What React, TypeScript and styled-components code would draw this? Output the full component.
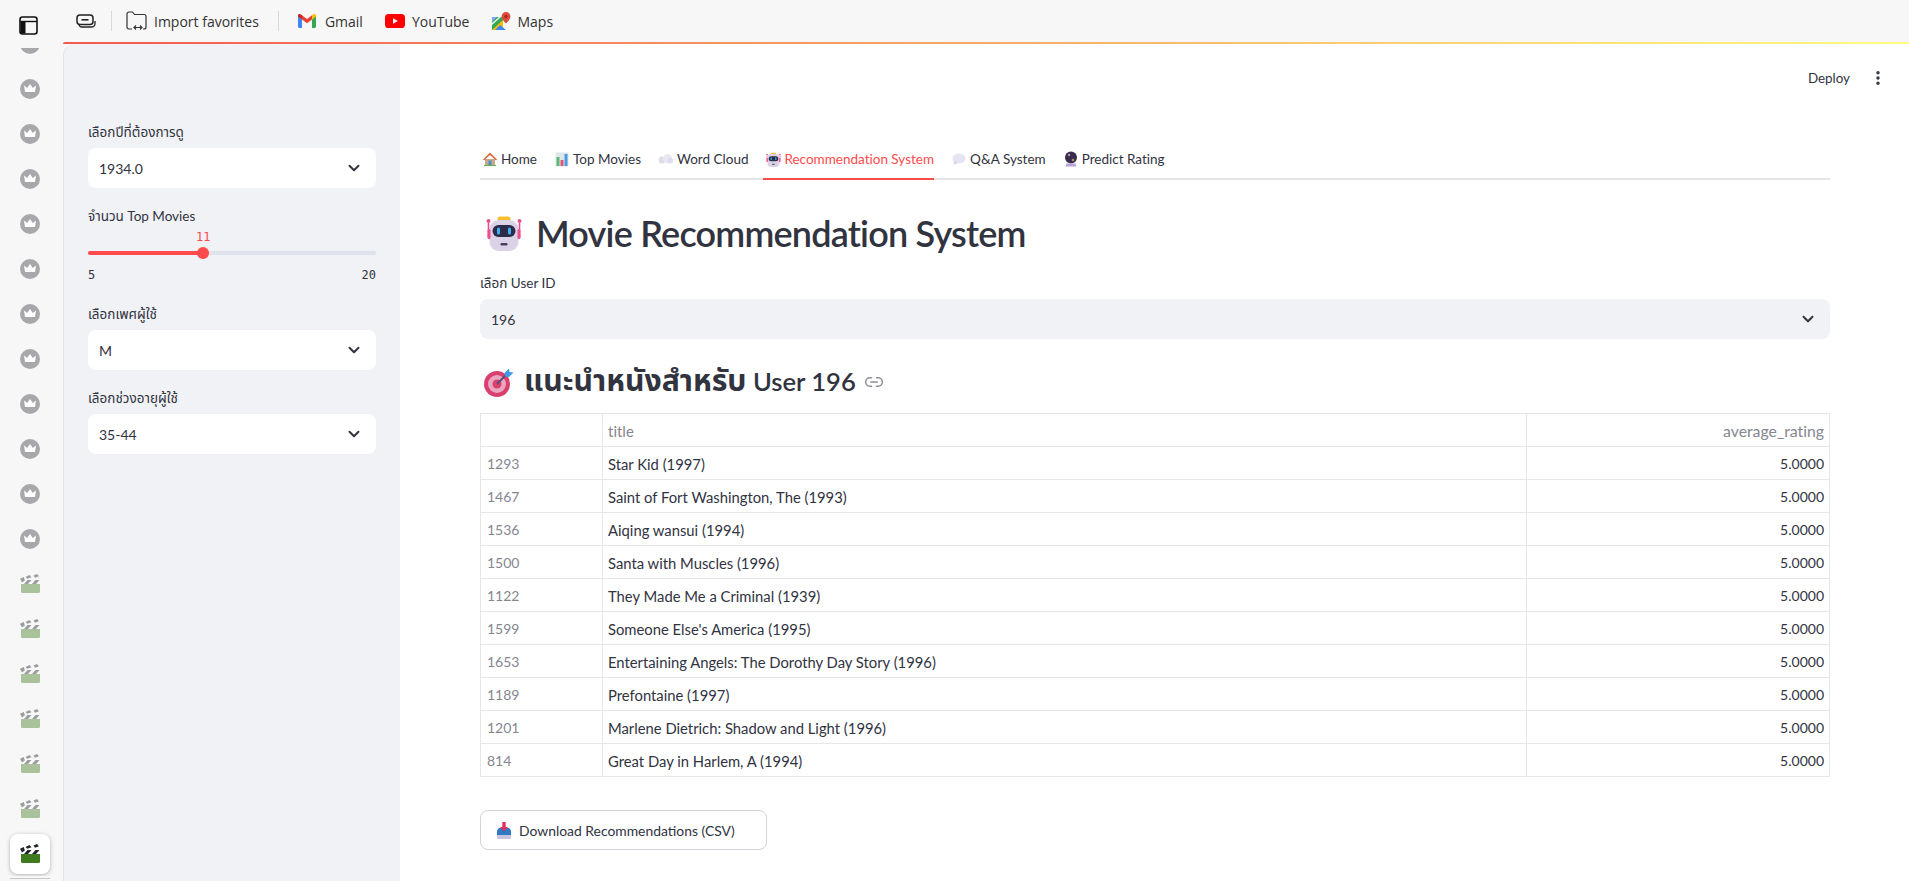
import React from "react";
import styled, { createGlobalStyle } from "styled-components";
import { ChevronDown, EllipsisVertical, Link2 } from "lucide-react";

const GlobalStyle = createGlobalStyle`
  html, body {
    margin: 0;
    padding: 0;
    height: 100%;
    overflow: hidden;
    background: #fff;
    font-family: "Lato", "Noto Sans", "Noto Sans Thai", "Liberation Sans", sans-serif;
    font-variant-ligatures: none;
    color: #31333f;
  }
  * { box-sizing: border-box; }
`;

const movies = [
  ["1293", "Star Kid (1997)"],
  ["1467", "Saint of Fort Washington, The (1993)"],
  ["1536", "Aiqing wansui (1994)"],
  ["1500", "Santa with Muscles (1996)"],
  ["1122", "They Made Me a Criminal (1939)"],
  ["1599", "Someone Else's America (1995)"],
  ["1653", "Entertaining Angels: The Dorothy Day Story (1996)"],
  ["1189", "Prefontaine (1997)"],
  ["1201", "Marlene Dietrich: Shadow and Light (1996)"],
  ["814", "Great Day in Harlem, A (1994)"],
];

const PanelIcon = () => (
  <svg width="19" height="19" viewBox="0 0 19 19" fill="none">
    <rect x="1" y="1" width="17" height="17" rx="2.5" stroke="#111" strokeWidth="1.6" />
    <path d="M1 5.5h17" stroke="#111" strokeWidth="1.4" />
    <path d="M1.5 5.5h5v12h-3a2 2 0 0 1-2-2z" fill="#111" />
  </svg>
);

const TabsIcon = () => (
  <svg width="20" height="14" viewBox="0 0 20 14" fill="none" stroke="#222">
    <path d="M3 10.5c.2 1.6 1.2 2.5 3 2.5h9c2.4 0 4-1.4 4-3.5V7" strokeWidth="1.3" />
    <rect x="1" y="1" width="16" height="9.5" rx="3" strokeWidth="1.5" />
    <path d="M5.5 5.8h7" strokeWidth="1.6" />
  </svg>
);

const ImportIcon = () => (
  <svg width="21" height="20" viewBox="0 0 21 20" fill="none" stroke="#333" strokeWidth="1.2">
    <path d="M6 18H3a2 2 0 0 1-2-2V3a2 2 0 0 1 2-2h3.5l2 2.5H18a2 2 0 0 1 2 2V16a2 2 0 0 1-2 2h-1" />
    <path d="M8 16.5h8M10 14.5l-2 2 2 2M14 14.5l2 2-2 2" />
  </svg>
);

const GmailIcon = () => (
  <svg width="18" height="14" viewBox="0 0 18 14">
    <path d="M0 2v10.8c0 .7.5 1.2 1.2 1.2H4V5.5z" fill="#4285f4" />
    <path d="M14 5.5V14h2.8c.7 0 1.2-.5 1.2-1.2V2z" fill="#34a853" />
    <path d="M4 5.5 9 9.2l5-3.7V1.2L9 5 4 1.2z" fill="#ea4335" />
    <path d="M14 1.2v4.3L18 2.4V1.6C18 .4 16.6-.4 15.6.3z" fill="#fbbc04" />
    <path d="M0 1.6v.8l4 3.1V1.2L2.4.3C1.4-.4 0 .4 0 1.6z" fill="#c5221f" />
  </svg>
);

const YouTubeIcon = () => (
  <svg width="20" height="14" viewBox="0 0 20 14">
    <rect width="20" height="14" rx="3.6" fill="#f00" />
    <path d="M8 4.2v5.6l4.8-2.8z" fill="#fff" />
  </svg>
);

const MapsIcon = () => (
  <svg width="20" height="19" viewBox="0 0 20 19">
    <path d="M1 5h11v13H1z" fill="#34a853" />
    <path d="M1 18 12 8v10z" fill="#fbbc04" />
    <path d="M4 18 9 13l6 5z" fill="#4285f4" />
    <path d="M1 5h5l-5 5z" fill="#7baaf7" />
    <path d="M1 11 8 5h2L1 13z" fill="#f1f3f4" />
    <path d="M15 0a4.4 4.4 0 0 0-4.4 4.4c0 3 4.4 7 4.4 7s4.400-4 4.400-7A4.400 4.400 0 0 0 15 0z" fill="#dd4b3e" />
    <circle cx="15" cy="4.400" r="1.600" fill="#a52714" />
  </svg>
);

const CrownBadge = () => (
  <svg width="20" height="20" viewBox="0 0 20 20">
    <circle cx="10" cy="10" r="10" fill="#a8a8ac" />
    <path d="M4 6.500 7.200 9 10 5l2.800 4L16 6.500l-1 6.500H5z" fill="#fff" />
  </svg>
);

const Clapper = () => (
  <svg width="20" height="19" viewBox="0 0 20 19">
    <path d="M1 10h19v7.500a1.500 1.500 0 0 1-1.500 1.500h-16A1.500 1.500 0 0 1 1 17.500z" fill="#3f7a1e" />
    <path d="M1.500 8.500h18V10h-18z" fill="#fff" />
    <path d="M4 10 7.500 6h4L8 10zM12 10l3.500-4h4L16 10z" fill="#20242b" />
    <path d="M0 4.800 3.800 3l1 3.500L2 8.500z" fill="#20242b" />
    <path d="M5.500 3 9.500 1l2 2.200-4.200 1.600zM13.500 1.500 17 0l2 2.200-4 1.600z" fill="#20242b" />
  </svg>
);

const HouseEmoji = () => (
  <svg width="14" height="14" viewBox="0 0 14 14">
    <path d="M2 7h10v6.500H2z" fill="#c7a98a" />
    <path d="M7 .5 0 7.500l1 1L7 3l6 5.500 1-1z" fill="#d9693c" />
    <path d="M5.500 8.500h3v5h-3z" fill="#4a90c2" />
    <path d="M1 13h12v1H1z" fill="#6cab5c" />
  </svg>
);

const ChartEmoji = () => (
  <svg width="14" height="15" viewBox="0 0 14 15">
    <rect x=".5" y=".5" width="13" height="14" rx="1" fill="#dfe6ea" />
    <path d="M1.500 5h3v9h-3z" fill="#5fb878" />
    <path d="M5.500 8h3v6h-3z" fill="#e2557a" />
    <path d="M9.500 2h3v12h-3z" fill="#4b9be0" />
  </svg>
);

const CloudEmoji = () => (
  <svg width="15" height="10" viewBox="0 0 15 10">
    <circle cx="4" cy="6" r="3.500" fill="#dcdcec" />
    <circle cx="9.500" cy="4.500" r="4.500" fill="#e9e9f4" />
    <circle cx="12" cy="6.500" r="3" fill="#dedeee" />
  </svg>
);

const RobotEmoji = ({ size }: { size: number }) => (
  <svg width={size} height={size} viewBox="0 0 36 36">
    <path d="M2.500 8v15M33.500 8v15" stroke="#ee4f8a" strokeWidth="1.600" />
    <circle cx="2.500" cy="6" r="2" fill="#ee4f8a" />
    <circle cx="33.500" cy="6" r="2" fill="#ee4f8a" />
    <rect x="11.500" y="1.500" width="13" height="5" rx="2.500" fill="#f3c12f" />
    <rect x="3.500" y="5" width="29" height="31" rx="9" fill="#dcd2e8" />
    <rect x="1.500" y="14" width="3" height="10" rx="1.500" fill="#ee4f8a" />
    <rect x="31.500" y="14" width="3" height="10" rx="1.500" fill="#ee4f8a" />
    <rect x="6.500" y="10" width="23" height="12" rx="6" fill="#2c2c48" />
    <rect x="11" y="12.500" width="3" height="7" rx="1.500" fill="#3fb0f2" />
    <rect x="22" y="12.500" width="3" height="7" rx="1.500" fill="#3fb0f2" />
    <rect x="14.500" y="28" width="7" height="2.500" rx="1.200" fill="#4a3f5c" />
  </svg>
);

const BubbleEmoji = () => (
  <svg width="14" height="13" viewBox="0 0 14 13">
    <ellipse cx="7" cy="5.500" rx="6.500" ry="5" fill="#e6e3f3" />
    <path d="M2.500 8 1.500 12 6 9.800z" fill="#d4d0e8" />
  </svg>
);

const BallEmoji = () => (
  <svg width="14" height="16" viewBox="0 0 14 16">
    <circle cx="7" cy="6.500" r="6" fill="#3a2c4c" />
    <circle cx="5" cy="4" r="1.200" fill="#a99bc0" />
    <path d="M9 7.500l.5 1 1 .5-1 .5-.5 1-.5-1-1-.5 1-.5z" fill="#f0d060" />
    <path d="M2.500 12.500h9l1 3h-11z" fill="#b9a4d6" />
  </svg>
);

const TargetEmoji = () => (
  <svg width="30" height="29" viewBox="0 0 30 29">
    <circle cx="13" cy="16" r="13" fill="#d9406e" />
    <circle cx="13" cy="16" r="9" fill="#eaa6c0" />
    <circle cx="13" cy="16" r="4.500" fill="#d9406e" />
    <path d="M13 16 24 5" stroke="#5a4a78" strokeWidth="1.800" />
    <path d="M20.500 5 25 .5l.5 3.500 4 .5L25 9l-4-.5z" fill="#3f9be8" />
  </svg>
);

const InboxEmoji = () => (
  <svg width="14" height="17" viewBox="0 0 14 17">
    <path d="M0 8.500 2 6h10l2 2.500V14H0z" fill="#2f78c4" />
    <path d="M0 13h14v3a1 1 0 0 1-1 1H1a1 1 0 0 1-1-1z" fill="#c9c4dc" />
    <path d="M5.300 0h3.400v5H11L7 9.500 3 5h2.300z" fill="#e0305f" />
  </svg>
);

const Select = ({ value, muted }: { value: string; muted?: boolean }) => (
  <SelectBox $muted={muted}>
    <span>{value}</span>
    <ChevronDown size={18} strokeWidth={2.6} color="#31333f" />
  </SelectBox>
);

const sliderPercent = ((11 - 5) / (20 - 5)) * 100;

const App = () => {
  return (
    <Page>
      <GlobalStyle />
      <TopBar>
        <PanelSlot>
          <PanelIcon />
        </PanelSlot>
        <TabsIcon />
        <BarDivider $before={15} $after={14} />
        <Bookmark $gap={7}>
          <ImportIcon />
          Import favorites
        </Bookmark>
        <BarDivider $before={19} $after={19} />
        <BookmarkGroup>
          <Bookmark $gap={9}>
            <GmailIcon />
            Gmail
          </Bookmark>
          <Bookmark $gap={7}>
            <YouTubeIcon />
            YouTube
          </Bookmark>
          <Bookmark $gap={6}>
            <MapsIcon />
            Maps
          </Bookmark>
        </BookmarkGroup>
      </TopBar>
      <Body>
        <Rail>
          <RailList>
            {Array.from({ length: 12 }).map((_, i) => (
              <RailItem key={`crown-${i}`}>
                <CrownBadge />
              </RailItem>
            ))}
            {Array.from({ length: 6 }).map((_, i) => (
              <RailItem key={`clip-${i}`} $faded>
                <Clapper />
              </RailItem>
            ))}
            <RailItem>
              <ActiveTile>
                <Clapper />
              </ActiveTile>
            </RailItem>
          </RailList>
          <RailRule />
        </Rail>
        <Workspace>
          <LoadingBar />
          <Columns>
            <Sidebar>
              <Field>
                <Label>เลือกปีที่ต้องการดู</Label>
                <Select value="1934.0" />
              </Field>
              <Field>
                <Label>จำนวน Top Movies</Label>
                <SliderBlock>
                  <SliderTrack>
                    <SliderFill style={{ width: `${sliderPercent}%` }}>
                      <SliderValue>11</SliderValue>
                      <SliderThumb />
                    </SliderFill>
                  </SliderTrack>
                  <SliderTicks>
                    <span>5</span>
                    <span>20</span>
                  </SliderTicks>
                </SliderBlock>
              </Field>
              <Field>
                <Label>เลือกเพศผู้ใช้</Label>
                <Select value="M" />
              </Field>
              <Field>
                <Label>เลือกช่วงอายุผู้ใช้</Label>
                <Select value="35-44" />
              </Field>
            </Sidebar>
            <Main>
              <Toolbar>
                <DeployLabel>Deploy</DeployLabel>
                <EllipsisVertical size={18} strokeWidth={2.6} color="#31333f" />
              </Toolbar>
              <TabList>
                <Tab>
                  <EmojiSlot>
                    <HouseEmoji />
                  </EmojiSlot>
                  Home
                </Tab>
                <Tab>
                  <EmojiSlot>
                    <ChartEmoji />
                  </EmojiSlot>
                  Top Movies
                </Tab>
                <Tab>
                  <EmojiSlot>
                    <CloudEmoji />
                  </EmojiSlot>
                  Word Cloud
                </Tab>
                <Tab $active>
                  <EmojiSlot>
                    <RobotEmoji size={15} />
                  </EmojiSlot>
                  Recommendation System
                </Tab>
                <Tab>
                  <EmojiSlot>
                    <BubbleEmoji />
                  </EmojiSlot>
                  Q&amp;A System
                </Tab>
                <Tab>
                  <EmojiSlot>
                    <BallEmoji />
                  </EmojiSlot>
                  Predict Rating
                </Tab>
              </TabList>
              <PageTitle>
                <RobotEmoji size={36} />
                Movie Recommendation System
              </PageTitle>
              <Label>เลือก User ID</Label>
              <Select value="196" muted />
              <SectionTitle>
                <TargetEmoji />
                <SectionText>
                  <ThaiText>แนะนำหนังสำหรับ</ThaiText> User 196
                </SectionText>
                <Link2 size={20} color="#8d8f99" strokeWidth={1.8} />
              </SectionTitle>
              <MovieTable>
                <colgroup>
                  <col style={{ width: 122 }} />
                  <col />
                  <col style={{ width: 303 }} />
                </colgroup>
                <thead>
                  <tr>
                    <HeadCell />
                    <HeadCell>title</HeadCell>
                    <HeadCell $right>average_rating</HeadCell>
                  </tr>
                </thead>
                <tbody>
                  {movies.map(([id, title]) => (
                    <tr key={id}>
                      <IndexCell>{id}</IndexCell>
                      <TitleCell>{title}</TitleCell>
                      <BodyCell $right>5.0000</BodyCell>
                    </tr>
                  ))}
                </tbody>
              </MovieTable>
              <DownloadButton>
                <InboxEmoji />
                Download Recommendations (CSV)
              </DownloadButton>
            </Main>
          </Columns>
        </Workspace>
      </Body>
    </Page>
  );
};

const Page = styled.div`
  width: 100vw;
  height: 100vh;
  display: flex;
  flex-direction: column;
  overflow: hidden;
`;

const TopBar = styled.div`
  height: 42px;
  flex: none;
  display: flex;
  align-items: center;
  background: #f7f7f7;
  color: #333;
  padding-right: 20px;
  font-family: "Open Sans", "Noto Sans", sans-serif;
  font-size: 14px;
`;

const PanelSlot = styled.div`
  width: 76px;
  padding: 12px 0 0 19px;
`;

const BarDivider = styled.div<{ $before: number; $after: number }>`
  width: 1px;
  height: 20px;
  background: #d9d9d9;
  margin: 0 ${(p) => p.$after}px 0 ${(p) => p.$before}px;
`;

const BookmarkGroup = styled.div`
  display: flex;
  align-items: center;
  gap: 22px;
`;

const Bookmark = styled.div<{ $gap: number }>`
  display: flex;
  align-items: center;
  gap: ${(p) => p.$gap}px;
  white-space: nowrap;
`;

const Body = styled.div`
  flex: 1;
  min-height: 0;
  display: flex;
`;

const Rail = styled.div`
  width: 63px;
  flex: none;
  display: flex;
  flex-direction: column;
  background: #f7f7f7;
  padding: 6px 3px 2px 0;
`;

const RailList = styled.div`
  flex: 1;
  min-height: 0;
  overflow: hidden;
  display: flex;
  flex-direction: column;
  justify-content: flex-end;
`;

const RailItem = styled.div<{ $faded?: boolean }>`
  height: 45px;
  flex: none;
  display: flex;
  align-items: center;
  justify-content: center;
  opacity: ${(p) => (p.$faded ? 0.42 : 1)};
`;

const ActiveTile = styled.div`
  width: 40px;
  height: 40px;
  display: flex;
  align-items: center;
  justify-content: center;
  background: #fff;
  border-radius: 8px;
  box-shadow: 0 1px 4px rgba(0, 0, 0, 0.28);
`;

const RailRule = styled.div`
  height: 1px;
  flex: none;
  margin: 2px 10px 0;
  background: #c8c8c8;
`;

const Workspace = styled.div`
  flex: 1;
  min-width: 0;
  display: flex;
  flex-direction: column;
  background: #f7f7f7;
`;

const LoadingBar = styled.div`
  height: 2px;
  flex: none;
  border-top-left-radius: 8px;
  background: linear-gradient(90deg, #f2584f, #fffd80);
`;

const Columns = styled.div`
  flex: 1;
  min-height: 0;
  display: flex;
`;

const Sidebar = styled.aside`
  width: 337px;
  flex: none;
  display: flex;
  flex-direction: column;
  gap: 18px;
  padding: 78px 24px 0 24px;
  background: #f0f2f6;
  border-top-left-radius: 12px;
  border-left: 1px solid #e4e4e6;
`;

const Field = styled.div`
  display: flex;
  flex-direction: column;
`;

const Label = styled.div`
  height: 20px;
  margin-bottom: 6px;
  font-size: 13.5px;
  line-height: 20px;
  color: #31333f;
`;

const SelectBox = styled.div<{ $muted?: boolean }>`
  height: 40px;
  display: flex;
  align-items: center;
  justify-content: space-between;
  padding: 0 13px 0 11px;
  border-radius: 8px;
  font-size: 14px;
  color: #31333f;
  background: ${(p) => (p.$muted ? "#f0f2f6" : "#fff")};
`;

const SliderBlock = styled.div`
  padding: 19px 0 3px;
`;

const SliderTrack = styled.div`
  height: 4px;
  border-radius: 2px;
  background: #dfe2ea;
`;

const SliderFill = styled.div`
  position: relative;
  height: 4px;
  border-radius: 2px;
  background: #ff4b4b;
`;

const SliderThumb = styled.div`
  position: absolute;
  right: -6px;
  top: -4px;
  width: 12px;
  height: 12px;
  border-radius: 50%;
  background: #ff4b4b;
`;

const SliderValue = styled.div`
  position: absolute;
  right: -10px;
  top: -22px;
  width: 20px;
  text-align: center;
  font-family: "DejaVu Sans Mono", "Liberation Mono", monospace;
  font-size: 12px;
  line-height: 16px;
  color: #ff4b4b;
`;

const SliderTicks = styled.div`
  display: flex;
  justify-content: space-between;
  margin-top: 12px;
  font-family: "DejaVu Sans Mono", "Liberation Mono", monospace;
  font-size: 12px;
  line-height: 16px;
  color: #31333f;
`;

const Main = styled.main`
  flex: 1;
  min-width: 0;
  background: #fff;
  padding: 0 79px 0 80px;
`;

const Toolbar = styled.div`
  height: 68px;
  display: flex;
  align-items: center;
  justify-content: flex-end;
  gap: 19px;
  margin-right: -57px;
`;

const DeployLabel = styled.div`
  font-size: 13.4px;
  color: #31333f;
`;

const TabList = styled.div`
  margin-top: 28px;
  height: 40px;
  display: flex;
  gap: 15px;
  border-bottom: 2px solid #e6e6ea;
`;

const Tab = styled.div<{ $active?: boolean }>`
  height: 40px;
  display: flex;
  align-items: center;
  gap: 3px;
  padding-left: 2px;
  font-size: 13.5px;
  white-space: nowrap;
  color: ${(p) => (p.$active ? "#ff4b4b" : "#31333f")};
  border-bottom: 2px solid ${(p) => (p.$active ? "#ff4b4b" : "transparent")};
`;

const EmojiSlot = styled.span`
  width: 16px;
  flex: none;
  display: flex;
  align-items: center;
  justify-content: center;
`;

const PageTitle = styled.h1`
  margin: 28px 0 15px;
  height: 50px;
  display: flex;
  align-items: center;
  gap: 14px;
  padding-left: 6px;
  font-size: 36px;
  font-weight: 600;
  letter-spacing: -0.8px;
  color: #31333f;
`;

const SectionTitle = styled.h2`
  margin: 22px 0 10px;
  height: 42px;
  display: flex;
  align-items: center;
  gap: 10px;
  padding-left: 4px;
  font-size: 25.6px;
  font-weight: 600;
  color: #31333f;
`;

const SectionText = styled.span`
  margin-right: -2px;
`;

const ThaiText = styled.span`
  font-size: 30.2px;
  font-weight: 700;
`;

const MovieTable = styled.table`
  width: 100%;
  table-layout: fixed;
  border-collapse: collapse;
  font-size: 14px;
`;

const HeadCell = styled.th<{ $right?: boolean }>`
  height: 33px;
  padding: 1px 5px 0;
  border: 1px solid #e6e6ea;
  font-size: ${(p) => (p.$right ? "15.8px" : "15px")};
  font-weight: 400;
  color: #85868f;
  text-align: ${(p) => (p.$right ? "right" : "left")};
`;

const BodyCell = styled.td<{ $right?: boolean }>`
  height: 33px;
  padding: 1px 5px 0;
  border: 1px solid #e6e6ea;
  color: #31333f;
  text-align: ${(p) => (p.$right ? "right" : "left")};
`;

const TitleCell = styled(BodyCell)`
  font-size: 14.8px;
`;

const IndexCell = styled(BodyCell)`
  padding-left: 6px;
  color: #85868f;
`;

const DownloadButton = styled.button`
  margin-top: 33px;
  height: 40px;
  width: 287px;
  display: flex;
  align-items: center;
  gap: 8px;
  padding: 0 0 0 16px;
  background: #fff;
  border: 1px solid #d2d3d9;
  border-radius: 8px;
  font-family: inherit;
  font-size: 13.9px;
  color: #31333f;
`;

export default App;
